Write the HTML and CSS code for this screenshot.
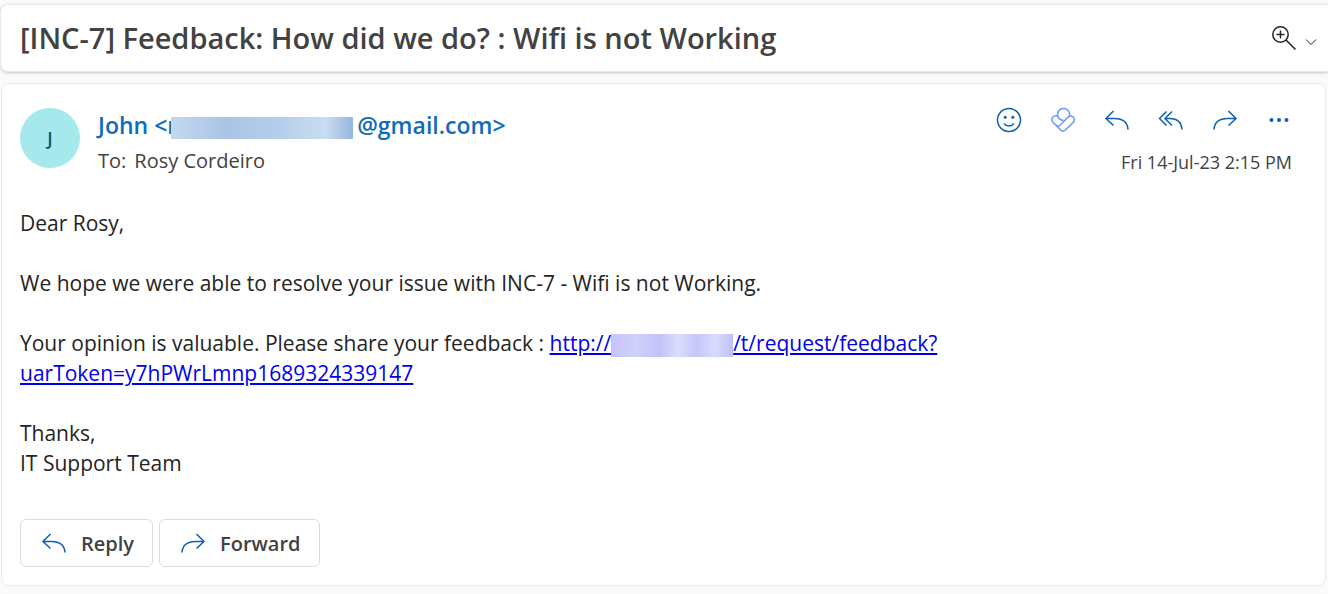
FILE: index.html
```html
<!DOCTYPE html>
<html lang="en">
<head>
  <meta charset="UTF-8" />
  <meta name="viewport" content="width=device-width, initial-scale=1.0"/>
  <title>Feedback: How did we do?</title>
  <link rel="stylesheet" href="styles.css">
</head>
<body>
  <!-- icons used more than once -->
  <svg class="defs" aria-hidden="true">
    <symbol id="icon-reply" viewBox="0 0 26 26">
      <path d="M9.500 4 2 11.500l7.500 7M2 11.500h8.500c8 0 13 4 13.500 11"/>
    </symbol>
    <symbol id="icon-forward" viewBox="0 0 26 26">
      <path d="M16.500 4 24 11.500l-7.500 7M24 11.500h-8.500c-8 0-13 4-13.500 11"/>
    </symbol>
  </svg>

  <header class="subject-bar">
    <h1>[INC-7] Feedback: How did we do? : Wifi is not Working</h1>
    <div class="zoom-tools">
      <button class="icon-btn zoom-btn" aria-label="Zoom">
        <svg viewBox="0 0 26 26"><circle cx="9.500" cy="9.500" r="7.700"/><path d="M9.500 5.500v8M5.500 9.500h8M15 15l9.500 9.500"/></svg>
      </button>
      <button class="icon-btn chevron-btn" aria-label="More zoom options">
        <svg viewBox="0 0 12 12"><path d="M1 3.500l5 5 5-5"/></svg>
      </button>
    </div>
  </header>

  <main class="message">
    <div class="message-header">
      <div class="avatar">J</div>
      <div class="people">
        <div class="sender">John &lt;r<span class="masked masked-mail"></span>@gmail.com&gt;</div>
        <div class="recipient"><span>To:</span><span>Rosy Cordeiro</span></div>
      </div>
      <div class="message-side">
        <div class="actions">
          <button class="icon-btn" aria-label="React">
            <svg viewBox="0 0 26 26"><circle cx="13" cy="13" r="11.500"/><path d="M8 16.500c2.500 3.300 7.500 3.300 10 0"/><circle class="dot" cx="9.200" cy="10.300" r="1.500"/><circle class="dot" cx="16.800" cy="10.300" r="1.500"/></svg>
          </button>
          <button class="icon-btn loop-btn" aria-label="Share to Loop">
            <svg viewBox="0 0 26 26"><path d="M19.300 9A6 6 0 1 0 13.500 13.400M7.800 9.200Q5 8 2.800 10.200Q.8 12.700 3 15.200L10.600 23Q13 25.200 15.400 23L23.400 15.200Q25.400 12.700 23.400 10.200Q20.800 8 18.200 10L9.500 18.700Q7.500 20 5.600 17.800M7.800 9.200Q9 13 13.500 13.400"/></svg>
          </button>
          <button class="icon-btn" aria-label="Reply"><svg><use href="#icon-reply"/></svg></button>
          <button class="icon-btn" aria-label="Reply all">
            <svg viewBox="0 0 26 26"><path d="M8.500 4.500 1.500 11.500l7 7M14 4.500 7 11.500l7 7M7 11.500h5c7 0 11.500 4 12 11"/></svg>
          </button>
          <button class="icon-btn" aria-label="Forward"><svg><use href="#icon-forward"/></svg></button>
          <button class="icon-btn" aria-label="More actions">
            <svg viewBox="0 0 26 26"><circle class="dot" cx="5.500" cy="13" r="2"/><circle class="dot" cx="13" cy="13" r="2"/><circle class="dot" cx="20.500" cy="13" r="2"/></svg>
          </button>
        </div>
        <time class="date" datetime="2023-07-14T14:15">Fri 14-Jul-23 2:15 PM</time>
      </div>
    </div>

    <div class="message-body">
      <p>Dear Rosy,</p>
      <p>We hope we were able to resolve your issue with INC-7 - Wifi is not Working.</p>
      <p>Your opinion is valuable. Please share your feedback : <a href="#feedback">http://<span class="masked masked-host"></span>/t/request/feedback?<br>uarToken=y7hPWrLmnp1689324339147</a></p>
      <p>Thanks,<br>IT Support Team</p>
    </div>

    <div class="message-footer">
      <button class="reply-btn"><svg><use href="#icon-reply"/></svg>Reply</button>
      <button class="reply-btn"><svg><use href="#icon-forward"/></svg>Forward</button>
    </div>
  </main>
</body>
</html>
```
FILE: styles.css
```css
* {
  box-sizing: border-box;
}

body {
  margin: 0;
  padding-top: 4px;
  background: #fafafa;
  color: #242424;
  font-family: "Segoe UI", "Open Sans", "Noto Sans", sans-serif;
}

h1, p {
  margin: 0;
}

button {
  font-family: inherit;
  cursor: pointer;
}

svg {
  width: 26px;
  height: 26px;
  fill: none;
  stroke: currentColor;
  stroke-width: 1.5;
}

svg .dot {
  fill: currentColor;
  stroke: none;
}

.defs {
  display: none;
}

/* Subject */
.subject-bar {
  display: flex;
  align-items: center;
  justify-content: space-between;
  min-height: 68px;
  padding: 0 11px 0 19px;
  background: #fff;
  border: 1px solid #e8e8e8;
  border-right: none;
  border-radius: 8px 0 0 8px;
  box-shadow: 0 1px 3px rgba(0, 0, 0, 0.2);
}

.subject-bar h1 {
  color: #424242;
  font-size: 29px;
  line-height: 40px;
  font-weight: 600;
}

.zoom-tools {
  display: flex;
  align-items: center;
  gap: 8px;
}

.icon-btn {
  display: flex;
  padding: 0;
  background: none;
  border: none;
  color: #0f5fb5;
}

.zoom-btn,
.chevron-btn {
  color: #242424;
}

.chevron-btn {
  padding-top: 8px;
}

.chevron-btn svg {
  width: 12px;
  height: 12px;
  stroke-width: 1;
}

/* Message card */
.message {
  margin: 11px 2px 8px 1px;
  padding: 22px 18px 18px;
  background: #fff;
  border: 1px solid #ebebeb;
  border-radius: 8px;
}

.message-header {
  display: flex;
  gap: 18px;
}

.avatar {
  display: flex;
  align-items: center;
  justify-content: center;
  width: 60px;
  height: 60px;
  margin-top: 2px;
  border-radius: 50%;
  background: #a6e9ed;
  color: #005b70;
  font-size: 18px;
  font-weight: 600;
}

.people {
  flex: 1;
}

.sender {
  color: #0f6cbd;
  font-size: 23px;
  line-height: 38px;
  font-weight: 600;
}

.recipient {
  display: flex;
  gap: 8px;
  color: #424242;
  font-size: 20px;
  line-height: 34px;
}

/* Hidden parts of addresses */
.masked {
  display: inline-block;
  vertical-align: middle;
}

.masked-mail {
  width: 182px;
  height: 22px;
  margin: 0 4px 0 -6px;
  background: linear-gradient(90deg, #c4d8ee, #a9c5e5 30%, #b6cfea 60%, #c9dcf0 85%, #94b7de);
}

.masked-host {
  width: 122px;
  height: 23px;
  background: linear-gradient(90deg, #c4c4fb, #d0d0fb 20%, #c2c2fa 40%, #dcdcfc 55%, #c6c6fa 70%, #dadafc 85%, #c0c0fa);
}

.message-side {
  display: flex;
  flex-direction: column;
  align-items: flex-end;
  padding-right: 15px;
}

.actions {
  display: flex;
  gap: 28px;
  padding-top: 1px;
}

.loop-btn {
  color: #6698ff;
}

.date {
  margin-top: 15px;
  color: #424242;
  font-size: 18px;
  line-height: 28px;
}

.message-body {
  display: flex;
  flex-direction: column;
  gap: 30px;
  margin-top: 30px;
  font-size: 21px;
  line-height: 30px;
}

.message-body a {
  color: #0000ee;
}

.message-footer {
  display: flex;
  gap: 6px;
  margin-top: 41px;
}

.reply-btn {
  display: flex;
  align-items: center;
  gap: 14px;
  height: 48px;
  padding: 0 18px 0 20px;
  background: #fff;
  border: 1px solid #dcdcdc;
  border-radius: 6px;
  color: #424242;
  font-size: 20px;
  font-weight: 600;
}

.reply-btn svg {
  color: #0f5fb5;
}
```
